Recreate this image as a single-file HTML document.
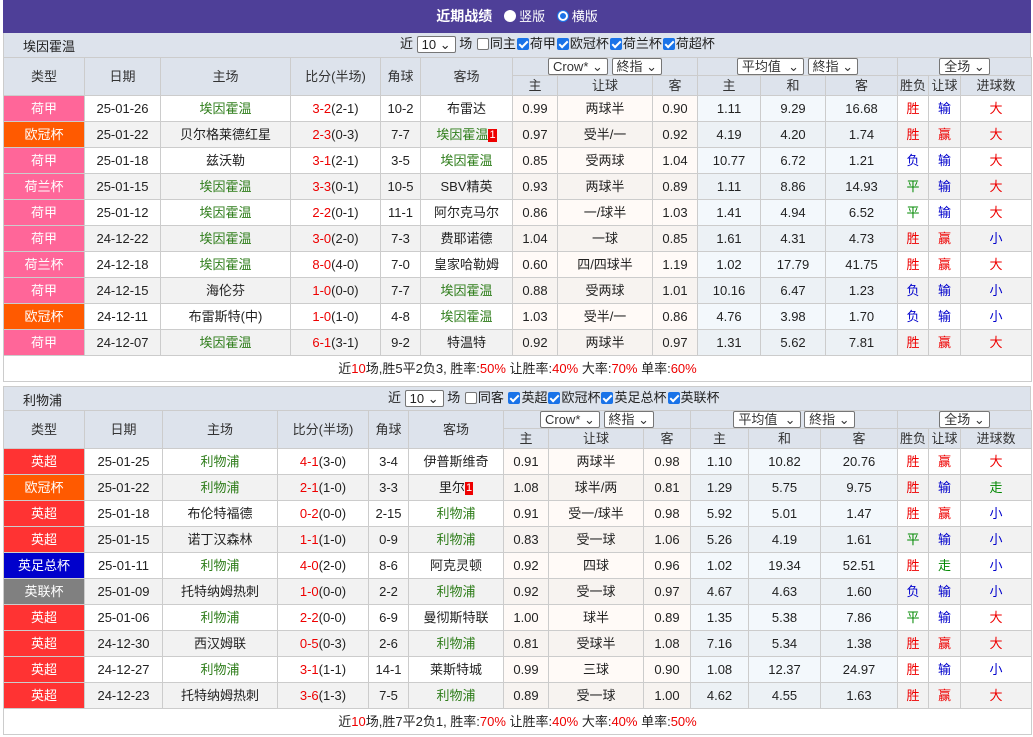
<!DOCTYPE html>
<html><head><meta charset="utf-8">
<style>
*{margin:0;padding:0;box-sizing:border-box}
body{width:1033px;height:737px;background:#fff;font-family:"Liberation Sans","Noto Sans CJK SC",sans-serif;font-size:13px;color:#222;overflow:hidden}
.wrap{position:absolute;left:3px;top:0;width:1028px}
.title{height:33px;background:#4e3f98;color:#fff;text-align:center;line-height:33px;font-size:14px;font-weight:bold}
.title span{font-weight:normal;font-size:13px}
.rad{display:inline-block;width:12px;height:12px;border-radius:50%;background:#fff;vertical-align:-1px;margin:0 3px 0 8px}
.rad.on{box-shadow:inset 0 0 0 2px #fff,inset 0 0 0 6px #1a73e8;border:1px solid #1a73e8}
.bar{height:24px;background:#dde3ec;position:relative;border-left:1px solid #ccc;border-right:1px solid #ccc}
.bar .nm{position:absolute;left:19px;top:3px;font-size:13px}
.bar .ctl{position:absolute;top:2px;font-size:13px;line-height:18px;white-space:nowrap}
.sel{display:inline-block;border:1px solid #767676;background:#fff;height:17px;line-height:15px;padding:0 4px;font-size:13px;border-radius:2px;vertical-align:middle}
.cb{display:inline-block;width:12px;height:12px;border:1px solid #767676;border-radius:2px;background:#fff;vertical-align:-2px;margin:0 1px}
.cb.on{background:#1a73e8;border-color:#1a73e8;position:relative}
.cb.on:after{content:"";position:absolute;left:3px;top:0px;width:3px;height:7px;border:solid #fff;border-width:0 2px 2px 0;transform:rotate(45deg)}
table{border-collapse:collapse;table-layout:fixed;width:1028px}
td{border:1px solid #ccc;text-align:center;height:26px;white-space:nowrap;overflow:hidden;padding:0;line-height:15px}
thead td{background:#dde3ec;height:20px;color:#333}
thead tr.h1 td{height:18px}
thead td.rs{height:38px}
.g{color:#2e7d1a}.r{color:#e00}.b{color:#00c}.gr{color:#080}
tbody tr.e td{background:#f2f2f2}
td.o{background:#fffaf7}td.a{background:#f3f8fc}
tr.e td.o{background:#f7f3f0!important}tr.e td.a{background:#ecf1f5!important}
td.t{color:#fff}
.pk{background:#ff6699!important}.or{background:#ff5a00!important}.rd{background:#ff3333!important}.bl{background:#0000cc!important}.gy{background:#808080!important}
.badge{display:inline-block;background:#e00;color:#fff;font-size:11px;line-height:13px;padding:0 1px;vertical-align:1px}
.sum td{height:26px;background:#fff!important;text-align:center}
</style></head><body><div class="wrap">
<div class="title">近期战绩 <span><i class="rad"></i>竖版 <i class="rad on"></i>横版</span></div>

<div class="bar"><span class="nm">埃因霍温</span><span class="ctl" style="left:396px">近 <span class="sel">10 ⌄</span> 场 <i class="cb"></i>同主<i class="cb on"></i>荷甲<i class="cb on"></i>欧冠杯<i class="cb on"></i>荷兰杯<i class="cb on"></i>荷超杯</span></div>
<table>
<colgroup><col style="width:81px"><col style="width:76px"><col style="width:130px"><col style="width:90px"><col style="width:40px"><col style="width:92px"><col style="width:45px"><col style="width:95px"><col style="width:45px"><col style="width:63px"><col style="width:65px"><col style="width:72px"><col style="width:31px"><col style="width:32px"><col style="width:71px"></colgroup>
<thead><tr class="h1"><td rowspan="2" class="rs">类型</td><td rowspan="2" class="rs">日期</td><td rowspan="2" class="rs">主场</td><td rowspan="2" class="rs">比分(半场)</td><td rowspan="2" class="rs">角球</td><td rowspan="2" class="rs">客场</td><td colspan="3"><span class="sel">Crow* ⌄</span> <span class="sel">終指 ⌄</span></td><td colspan="3"><span class="sel">平均值 &nbsp;⌄</span> <span class="sel">終指 ⌄</span></td><td colspan="3"><span class="sel">全场 ⌄</span></td></tr>
<tr><td>主</td><td>让球</td><td>客</td><td>主</td><td>和</td><td>客</td><td>胜负</td><td>让球</td><td>进球数</td></tr></thead>
<tbody>
<tr><td class="t pk">荷甲</td><td>25-01-26</td><td class="g">埃因霍温</td><td><span class="r">3-2</span>(2-1)</td><td>10-2</td><td>布雷达</td><td class="o">0.99</td><td class="o">两球半</td><td class="o">0.90</td><td class="a">1.11</td><td class="a">9.29</td><td class="a">16.68</td><td class="r">胜</td><td class="b">输</td><td class="r">大</td></tr>
<tr class="e"><td class="t or">欧冠杯</td><td>25-01-22</td><td>贝尔格莱德红星</td><td><span class="r">2-3</span>(0-3)</td><td>7-7</td><td class="g">埃因霍温<span class="badge">1</span></td><td class="o">0.97</td><td class="o">受半/一</td><td class="o">0.92</td><td class="a">4.19</td><td class="a">4.20</td><td class="a">1.74</td><td class="r">胜</td><td class="r">赢</td><td class="r">大</td></tr>
<tr><td class="t pk">荷甲</td><td>25-01-18</td><td>兹沃勒</td><td><span class="r">3-1</span>(2-1)</td><td>3-5</td><td class="g">埃因霍温</td><td class="o">0.85</td><td class="o">受两球</td><td class="o">1.04</td><td class="a">10.77</td><td class="a">6.72</td><td class="a">1.21</td><td class="b">负</td><td class="b">输</td><td class="r">大</td></tr>
<tr class="e"><td class="t pk">荷兰杯</td><td>25-01-15</td><td class="g">埃因霍温</td><td><span class="r">3-3</span>(0-1)</td><td>10-5</td><td>SBV精英</td><td class="o">0.93</td><td class="o">两球半</td><td class="o">0.89</td><td class="a">1.11</td><td class="a">8.86</td><td class="a">14.93</td><td class="gr">平</td><td class="b">输</td><td class="r">大</td></tr>
<tr><td class="t pk">荷甲</td><td>25-01-12</td><td class="g">埃因霍温</td><td><span class="r">2-2</span>(0-1)</td><td>11-1</td><td>阿尔克马尔</td><td class="o">0.86</td><td class="o">一/球半</td><td class="o">1.03</td><td class="a">1.41</td><td class="a">4.94</td><td class="a">6.52</td><td class="gr">平</td><td class="b">输</td><td class="r">大</td></tr>
<tr class="e"><td class="t pk">荷甲</td><td>24-12-22</td><td class="g">埃因霍温</td><td><span class="r">3-0</span>(2-0)</td><td>7-3</td><td>费耶诺德</td><td class="o">1.04</td><td class="o">一球</td><td class="o">0.85</td><td class="a">1.61</td><td class="a">4.31</td><td class="a">4.73</td><td class="r">胜</td><td class="r">赢</td><td class="b">小</td></tr>
<tr><td class="t pk">荷兰杯</td><td>24-12-18</td><td class="g">埃因霍温</td><td><span class="r">8-0</span>(4-0)</td><td>7-0</td><td>皇家哈勒姆</td><td class="o">0.60</td><td class="o">四/四球半</td><td class="o">1.19</td><td class="a">1.02</td><td class="a">17.79</td><td class="a">41.75</td><td class="r">胜</td><td class="r">赢</td><td class="r">大</td></tr>
<tr class="e"><td class="t pk">荷甲</td><td>24-12-15</td><td>海伦芬</td><td><span class="r">1-0</span>(0-0)</td><td>7-7</td><td class="g">埃因霍温</td><td class="o">0.88</td><td class="o">受两球</td><td class="o">1.01</td><td class="a">10.16</td><td class="a">6.47</td><td class="a">1.23</td><td class="b">负</td><td class="b">输</td><td class="b">小</td></tr>
<tr><td class="t or">欧冠杯</td><td>24-12-11</td><td>布雷斯特(中)</td><td><span class="r">1-0</span>(1-0)</td><td>4-8</td><td class="g">埃因霍温</td><td class="o">1.03</td><td class="o">受半/一</td><td class="o">0.86</td><td class="a">4.76</td><td class="a">3.98</td><td class="a">1.70</td><td class="b">负</td><td class="b">输</td><td class="b">小</td></tr>
<tr class="e"><td class="t pk">荷甲</td><td>24-12-07</td><td class="g">埃因霍温</td><td><span class="r">6-1</span>(3-1)</td><td>9-2</td><td>特温特</td><td class="o">0.92</td><td class="o">两球半</td><td class="o">0.97</td><td class="a">1.31</td><td class="a">5.62</td><td class="a">7.81</td><td class="r">胜</td><td class="r">赢</td><td class="r">大</td></tr>
<tr class="sum"><td colspan="15">近<span class="r">10</span>场,胜5平2负3, 胜率:<span class="r">50%</span> 让胜率:<span class="r">40%</span> 大率:<span class="r">70%</span> 单率:<span class="r">60%</span></td></tr>
</tbody></table>

<div style="height:4px"></div>
<div class="bar" style="border-top:1px solid #ccc"><span class="nm">利物浦</span><span class="ctl" style="left:384px">近 <span class="sel">10 ⌄</span> 场 <i class="cb"></i>同客 <i class="cb on"></i>英超<i class="cb on"></i>欧冠杯<i class="cb on"></i>英足总杯<i class="cb on"></i>英联杯</span></div>
<table>
<colgroup><col style="width:81px"><col style="width:78px"><col style="width:115px"><col style="width:91px"><col style="width:40px"><col style="width:95px"><col style="width:45px"><col style="width:95px"><col style="width:47px"><col style="width:58px"><col style="width:72px"><col style="width:77px"><col style="width:31px"><col style="width:32px"><col style="width:71px"></colgroup>
<thead><tr class="h1"><td rowspan="2" class="rs">类型</td><td rowspan="2" class="rs">日期</td><td rowspan="2" class="rs">主场</td><td rowspan="2" class="rs">比分(半场)</td><td rowspan="2" class="rs">角球</td><td rowspan="2" class="rs">客场</td><td colspan="3"><span class="sel">Crow* ⌄</span> <span class="sel">終指 ⌄</span></td><td colspan="3"><span class="sel">平均值 &nbsp;⌄</span> <span class="sel">終指 ⌄</span></td><td colspan="3"><span class="sel">全场 ⌄</span></td></tr>
<tr><td>主</td><td>让球</td><td>客</td><td>主</td><td>和</td><td>客</td><td>胜负</td><td>让球</td><td>进球数</td></tr></thead>
<tbody>
<tr><td class="t rd">英超</td><td>25-01-25</td><td class="g">利物浦</td><td><span class="r">4-1</span>(3-0)</td><td>3-4</td><td>伊普斯维奇</td><td class="o">0.91</td><td class="o">两球半</td><td class="o">0.98</td><td class="a">1.10</td><td class="a">10.82</td><td class="a">20.76</td><td class="r">胜</td><td class="r">赢</td><td class="r">大</td></tr>
<tr class="e"><td class="t or">欧冠杯</td><td>25-01-22</td><td class="g">利物浦</td><td><span class="r">2-1</span>(1-0)</td><td>3-3</td><td>里尔<span class="badge">1</span></td><td class="o">1.08</td><td class="o">球半/两</td><td class="o">0.81</td><td class="a">1.29</td><td class="a">5.75</td><td class="a">9.75</td><td class="r">胜</td><td class="b">输</td><td class="gr">走</td></tr>
<tr><td class="t rd">英超</td><td>25-01-18</td><td>布伦特福德</td><td><span class="r">0-2</span>(0-0)</td><td>2-15</td><td class="g">利物浦</td><td class="o">0.91</td><td class="o">受一/球半</td><td class="o">0.98</td><td class="a">5.92</td><td class="a">5.01</td><td class="a">1.47</td><td class="r">胜</td><td class="r">赢</td><td class="b">小</td></tr>
<tr class="e"><td class="t rd">英超</td><td>25-01-15</td><td>诺丁汉森林</td><td><span class="r">1-1</span>(1-0)</td><td>0-9</td><td class="g">利物浦</td><td class="o">0.83</td><td class="o">受一球</td><td class="o">1.06</td><td class="a">5.26</td><td class="a">4.19</td><td class="a">1.61</td><td class="gr">平</td><td class="b">输</td><td class="b">小</td></tr>
<tr><td class="t bl">英足总杯</td><td>25-01-11</td><td class="g">利物浦</td><td><span class="r">4-0</span>(2-0)</td><td>8-6</td><td>阿克灵顿</td><td class="o">0.92</td><td class="o">四球</td><td class="o">0.96</td><td class="a">1.02</td><td class="a">19.34</td><td class="a">52.51</td><td class="r">胜</td><td class="gr">走</td><td class="b">小</td></tr>
<tr class="e"><td class="t gy">英联杯</td><td>25-01-09</td><td>托特纳姆热刺</td><td><span class="r">1-0</span>(0-0)</td><td>2-2</td><td class="g">利物浦</td><td class="o">0.92</td><td class="o">受一球</td><td class="o">0.97</td><td class="a">4.67</td><td class="a">4.63</td><td class="a">1.60</td><td class="b">负</td><td class="b">输</td><td class="b">小</td></tr>
<tr><td class="t rd">英超</td><td>25-01-06</td><td class="g">利物浦</td><td><span class="r">2-2</span>(0-0)</td><td>6-9</td><td>曼彻斯特联</td><td class="o">1.00</td><td class="o">球半</td><td class="o">0.89</td><td class="a">1.35</td><td class="a">5.38</td><td class="a">7.86</td><td class="gr">平</td><td class="b">输</td><td class="r">大</td></tr>
<tr class="e"><td class="t rd">英超</td><td>24-12-30</td><td>西汉姆联</td><td><span class="r">0-5</span>(0-3)</td><td>2-6</td><td class="g">利物浦</td><td class="o">0.81</td><td class="o">受球半</td><td class="o">1.08</td><td class="a">7.16</td><td class="a">5.34</td><td class="a">1.38</td><td class="r">胜</td><td class="r">赢</td><td class="r">大</td></tr>
<tr><td class="t rd">英超</td><td>24-12-27</td><td class="g">利物浦</td><td><span class="r">3-1</span>(1-1)</td><td>14-1</td><td>莱斯特城</td><td class="o">0.99</td><td class="o">三球</td><td class="o">0.90</td><td class="a">1.08</td><td class="a">12.37</td><td class="a">24.97</td><td class="r">胜</td><td class="b">输</td><td class="b">小</td></tr>
<tr class="e"><td class="t rd">英超</td><td>24-12-23</td><td>托特纳姆热刺</td><td><span class="r">3-6</span>(1-3)</td><td>7-5</td><td class="g">利物浦</td><td class="o">0.89</td><td class="o">受一球</td><td class="o">1.00</td><td class="a">4.62</td><td class="a">4.55</td><td class="a">1.63</td><td class="r">胜</td><td class="r">赢</td><td class="r">大</td></tr>
<tr class="sum"><td colspan="15">近<span class="r">10</span>场,胜7平2负1, 胜率:<span class="r">70%</span> 让胜率:<span class="r">40%</span> 大率:<span class="r">40%</span> 单率:<span class="r">50%</span></td></tr>
</tbody></table>
</div></body></html>
